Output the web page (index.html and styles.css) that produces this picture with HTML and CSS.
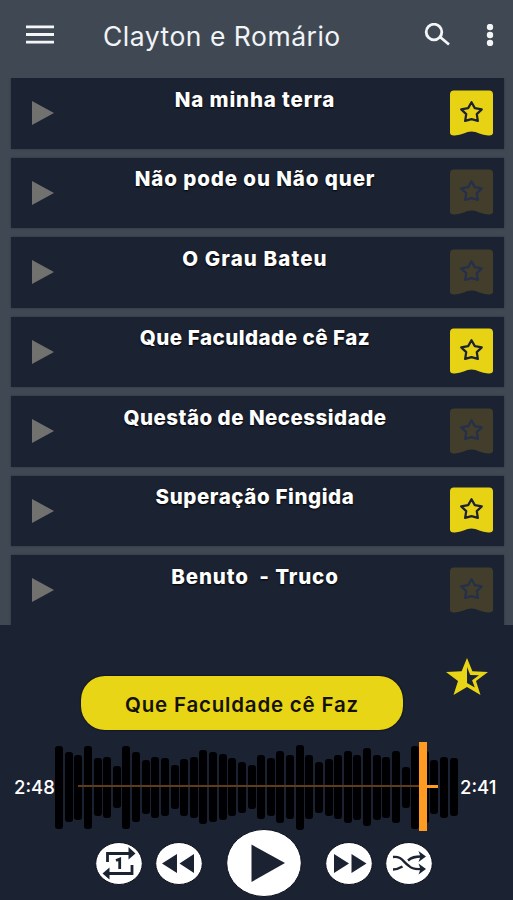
FILE: index.html
```html
<!DOCTYPE html>
<html lang="pt-BR">
<head>
<meta charset="utf-8">
<title>Clayton e Romário</title>
<link rel="stylesheet" href="styles.css">
</head>
<body>
<svg class="defs" aria-hidden="true">
  <symbol id="play" viewBox="0 0 22 24"><path d="M0 0 22 12 0 24Z"/></symbol>
  <symbol id="badge" viewBox="0 0 44 47">
    <path class="ribbon" d="M4 0H40Q44 0 44 4V43Q44 46.500 39 46Q34 45.500 30 44Q22 40 14 44Q10 45.500 5 46Q0 46.500 0 43V4Q0 0 4 0Z"/>
    <path class="star" d="M22 12 25.4 18 32.5 19.3 27.4 24.2 28.5 31 22 29.2 15.5 31 16.6 24.2 11.5 19.3 18.6 18Z"/>
  </symbol>
</svg>
<div class="app">
  <header class="bar">
    <svg class="menu" viewBox="0 0 28 19"><path d="M0 1.8H28M0 9.5H28M0 17.2H28"/></svg>
    <h1>Clayton e Romário</h1>
    <svg class="search" viewBox="0 0 26 23"><circle cx="10" cy="9" r="7.800"/><path d="M15.500 13.500 25 21.500"/></svg>
    <svg class="more" viewBox="0 0 8 22"><circle cx="4" cy="3" r="3.2"/><circle cx="4" cy="11" r="3.2"/><circle cx="4" cy="19" r="3.2"/></svg>
  </header>
  <main class="list" id="list"></main>
  <footer class="player">
    <div class="now">
      <div class="track">Que Faculdade cê Faz</div>
      <svg class="half" viewBox="0 0 42 37"><path class="outer" d="M21 0 26.4 13.2 42 14 30 23 34.5 37 21 29 7.5 37 12 23 0 14 15.6 13.2Z"/><path class="inner" d="M21 9 24.2 17 33 17.3 26.1 22.3 28.8 29.5 21 25Z"/></svg>
    </div>
    <div class="seek">
      <span class="time">2:48</span>
      <div class="wave"><div class="bars" id="bars"></div><i class="line"></i><i class="rest"></i><i class="head"></i></div>
      <span class="time">2:41</span>
    </div>
    <div class="controls">
      <svg class="btn" viewBox="0 0 48 43"><ellipse cx="24" cy="21.5" rx="23.3" ry="21"/><path class="ln" d="M12.500 20V11.500H34M37 23V31.500H14"/><path d="M33.5 5 40.500 11.5 33.5 17.500ZM14.500 25.500 7.500 31.5 14.500 37.500Z"/><path class="ln" d="M21 18.5 24.7 17V27"/></svg>
      <svg class="btn" viewBox="0 0 48 43"><ellipse cx="24" cy="21.5" rx="23.3" ry="21"/><path d="M22 12V31L7 21.5ZM39 12V31L24.5 21.5Z"/></svg>
      <svg class="btn big" viewBox="0 0 76 68"><ellipse cx="38" cy="34" rx="37.3" ry="33.5"/><path d="M25.5 15.5V53L59 34Z"/></svg>
      <svg class="btn" viewBox="0 0 48 43"><ellipse cx="24" cy="21.5" rx="23.3" ry="21"/><path d="M9 12V31L24 21.5ZM26.5 12V31L41.5 21.5Z"/></svg>
      <svg class="btn" viewBox="0 0 48 43"><ellipse cx="24" cy="21.5" rx="23.3" ry="21"/><path class="ln thin" d="M8 15C17 14 18 20 24 24C27 27 31 27.500 36 27M8 27.500C12 27.500 14 26.500 17.500 24.500M23 18.500C27 15 30 14.500 36 14.500"/><path d="M33.500 9 41 14.500 33.500 20 35.500 14.500ZM33.500 21.500 41 27 33.500 32.500 35.500 27Z"/></svg>
    </div>
  </footer>
</div>
<script src="app.js"></script>
</body>
</html>
```
FILE: styles.css
```css
* { box-sizing: border-box; }
body { margin: 0; background: #1b2232; font-family: "Inter", "Noto Sans", sans-serif; color: #fff; }
.defs { position: absolute; width: 0; height: 0; }
.app { width: 513px; height: 900px; display: flex; flex-direction: column; overflow: hidden; background: #404953; }
.bar { height: 78px; flex: none; display: flex; align-items: flex-start; padding-left: 26px; }
.bar svg { flex: none; fill: none; stroke: #f4f5f7; }
.menu { width: 28px; height: 19px; margin-top: 25px; stroke-width: 2.8; }
.bar h1 { margin: 16px 0 0 49px; width: 321px; font: 400 26.500px/40px "Inter", sans-serif; letter-spacing: 0.5px; color: #f1f4f7; white-space: nowrap; }
.search { width: 26px; height: 23px; margin-top: 23px; stroke-width: 2.8; }
.bar .more { width: 8px; height: 22px; margin: 24px 0 0 35.500px; fill: #f4f5f7; stroke: none; }
.list { height: 547px; flex: none; padding: 0 9.500px 0 10.500px; display: flex; flex-direction: column; gap: 9px; overflow: hidden; }
.song { height: 70.500px; flex: none; background: #1b2232; display: grid; grid-template-columns: 60px 1fr 60px; box-shadow: 0 0 2px #2a303f; }
.song .play { width: 22px; height: 24px; margin: 23px 0 0 21.500px; fill: #71716f; }
.song .name { text-align: center; font-weight: 800; font-size: 20.500px; line-height: 28px; padding: 7.500px 4px 0 0; white-space: pre; text-shadow: 0 1px 2px #000; }
.song .badge { width: 43px; height: 47px; margin: 11.500px 0 0 6.500px; --paper: #e8d214; --ink: #1c2233; }
.song .off { --paper: #423e2b; --ink: #25304a; }
.ribbon { fill: var(--paper); }
.star { fill: none; stroke: var(--ink); stroke-width: 2.300; stroke-linejoin: round; }
.player { flex: 1; background: #1b2232; display: flex; flex-direction: column; }
.now { height: 116px; flex: none; padding: 51px 0 0 81px; display: flex; }
.track { width: 322px; height: 54px; border-radius: 24px; background: #e8d515; color: #141107; text-align: center; font: 600 20.500px/57px "Inter", sans-serif; letter-spacing: 0.8px; box-shadow: 0 0 2px #000; white-space: nowrap; }
.half { width: 42px; height: 37px; margin: -18px 0 0 43px; }
.outer { fill: #e8d515; }
.inner { fill: #1b2232; }
.seek { height: 90px; flex: none; display: flex; align-items: center; padding-left: 14px; }
.time { width: 41px; font: 500 18.500px/24px "Inter", sans-serif; margin-top: 2px; white-space: nowrap; }
.wave { width: 405px; height: 90px; position: relative; }
.bars { display: flex; gap: 1.630px; align-items: center; height: 92px; }
.bars i { width: 8px; flex: none; border-radius: 3px; background: #000003; }
.line, .rest, .head { position: absolute; }
.line { left: 23px; width: 341px; top: 44px; height: 2px; background: #613c14; }
.rest { left: 368px; width: 15px; top: 44px; height: 3px; background: #ff9a22; }
.head { left: 364px; width: 8px; top: 1px; height: 89px; background: #ff9a22; }
.controls { display: flex; align-items: center; height: 68px; margin-top: -2px; padding-left: 95px; }
.btn { width: 48px; height: 43px; flex: none; margin-right: 12px; fill: #1b2232; }
.btn ellipse { fill: #fff; stroke: #0c101c; stroke-width: 1; }
.big { width: 76px; height: 68px; margin: 0 23px 0 11px; }
.ln { fill: none; stroke: #1b2232; stroke-width: 2.8; }
.thin { stroke-width: 2.4; }
```
FILE: app.js
```js
const songs = [
  ["Na minha terra", true, 0.85], ["Não pode ou Não quer", false, 0.9], ["O Grau Bateu", false, 1.1],
  ["Que Faculdade cê Faz", true, 0.5], ["Questão de Necessidade", false, 0.48],
  ["Superação Fingida", true, 0.6], ["Benuto  - Truco", false, 0.85]
];
document.getElementById("list").innerHTML = songs.map(([name, fav, track]) => `
  <div class="song"><svg class="play"><use href="#play"/></svg>
  <div class="name" style="letter-spacing:${track}px">${name}</div>
  <svg class="badge ${fav ? "" : "off"}"><use href="#badge"/></svg></div>`).join("");
const heights = [83,70,65,83,58,61,42,83,70,54,61,58,44,57,61,74,70,66,58,51,44,64,58,72,64,85,64,51,57,64,72,65,78,65,61,72,41,83,72,54,61,58];
document.getElementById("bars").innerHTML = heights.map(h => `<i style="height:${h}px"></i>`).join("");
```
